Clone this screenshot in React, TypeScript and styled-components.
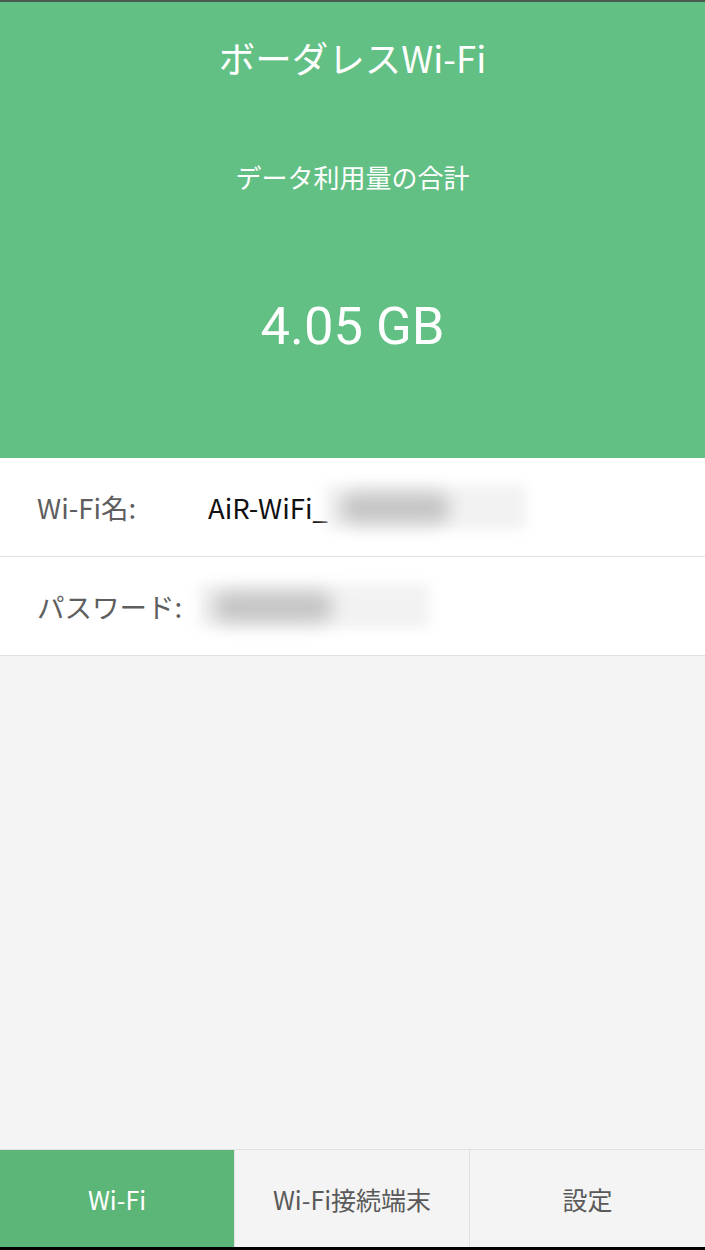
import React from "react";
import styled, { createGlobalStyle } from "styled-components";

const Global = createGlobalStyle`
  html, body { margin: 0; padding: 0; }
  body { font-family: "Noto Sans CJK JP", "Noto Sans", Roboto, sans-serif; background: #000; }
`;

const Screen = styled.div`
  width: 705px;
  height: 1250px;
  display: flex;
  flex-direction: column;
  background: #f4f4f4;
  overflow: hidden;
`;

const StatusEdge = styled.div`
  height: 2px;
  background: #4a5a4f;
  flex-shrink: 0;
`;

const Header = styled.header`
  height: 456px;
  flex-shrink: 0;
  background: #63c084;
  color: #fff;
  display: flex;
  flex-direction: column;
  align-items: center;
`;

const Title = styled.h1`
  margin: 32px 0 0;
  font-size: 36.5px;
  font-weight: 400;
  line-height: 48px;
`;

const Subtitle = styled.div`
  margin-top: 78px;
  font-size: 26px;
  line-height: 34px;
`;

const Amount = styled.div`
  margin-top: 100px;
  font-family: Roboto, "Noto Sans", sans-serif;
  font-size: 52.5px;
  line-height: 64px;
`;

const InfoList = styled.section`
  background: #fff;
  flex-shrink: 0;
`;

const InfoRow = styled.div`
  height: 98px;
  border-bottom: 1px solid #e2e2e2;
  display: flex;
  align-items: center;
  padding-left: 37px;
`;

const Label = styled.span<{ $w: number }>`
  width: ${(p) => p.$w}px;
  flex-shrink: 0;
  color: #5e5e5e;
  font-size: 27.5px;
`;

const Value = styled.span`
  color: #111;
  font-size: 27.5px;
  display: flex;
  align-items: center;
`;

const Blur = styled.span<{ $w: number; $core: number; $ml: number }>`
  position: relative;
  display: inline-block;
  width: ${(p) => p.$w}px;
  height: 44px;
  margin-left: ${(p) => p.$ml}px;
  &::before {
    content: "";
    position: absolute;
    inset: 0;
    background: #f2f2f2;
    filter: blur(6px);
  }
  &::after {
    content: "";
    position: absolute;
    left: 14px;
    top: 8px;
    width: ${(p) => p.$core}px;
    height: 30px;
    border-radius: 15px;
    background: #c4c4c4;
    filter: blur(9px);
  }
`;

const Spacer = styled.div`
  flex: 1;
`;

const TabBar = styled.nav`
  height: 97px;
  flex-shrink: 0;
  border-top: 1px solid #e0e0e0;
  display: grid;
  grid-template-columns: 235px 235px 235px;
  background: #f4f4f4;
`;

const Tab = styled.div<{ $active?: boolean }>`
  display: flex;
  align-items: center;
  justify-content: center;
  font-size: 25px;
  color: ${(p) => (p.$active ? "#fff" : "#5a5a5a")};
  background: ${(p) => (p.$active ? "#5bb677" : "#f4f4f4")};
  border-right: 1px solid #e0e0e0;
  &:last-child { border-right: none; }
`;

const NavEdge = styled.div`
  height: 3px;
  background: #000;
  flex-shrink: 0;
`;

export default function App() {
  return (
    <>
      <Global />
      <Screen>
        <StatusEdge />
        <Header>
          <Title>ボーダレスWi-Fi</Title>
          <Subtitle>データ利用量の合計</Subtitle>
          <Amount>4.05 GB</Amount>
        </Header>
        <InfoList>
          <InfoRow>
            <Label $w={171}>Wi-Fi名:</Label>
            <Value>
              AiR-WiFi_
              <Blur $w={200} $core={110} $ml={-2} />
            </Value>
          </InfoRow>
          <InfoRow>
            <Label $w={162}>パスワード:</Label>
            <Value>
              <Blur $w={230} $core={120} $ml={0} />
            </Value>
          </InfoRow>
        </InfoList>
        <Spacer />
        <TabBar>
          <Tab $active>Wi-Fi</Tab>
          <Tab>Wi-Fi接続端末</Tab>
          <Tab>設定</Tab>
        </TabBar>
        <NavEdge />
      </Screen>
    </>
  );
}
